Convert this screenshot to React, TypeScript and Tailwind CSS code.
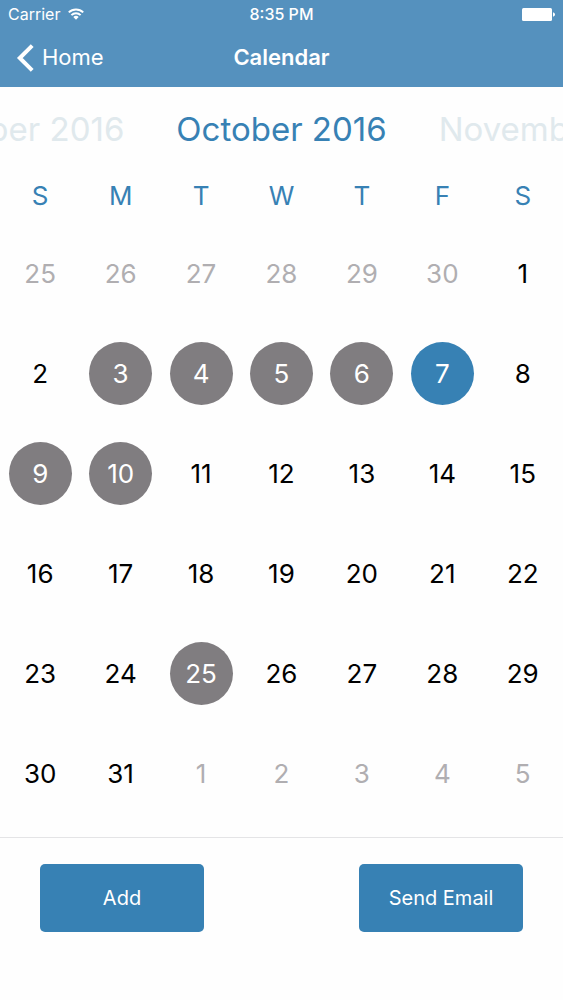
import clsx from "clsx";

type Day = { date: number; outside?: boolean; booked?: boolean; today?: boolean };

const weekdays = ["S", "M", "T", "W", "T", "F", "S"];
const booked = new Set([3, 4, 5, 6, 9, 10, 25]);
const today = 7;

const days: Day[] = [
  ...[25, 26, 27, 28, 29, 30].map((date) => ({ date, outside: true })),
  ...Array.from({ length: 31 }, (_, i) => ({
    date: i + 1,
    booked: booked.has(i + 1),
    today: i + 1 === today,
  })),
  ...[1, 2, 3, 4, 5].map((date) => ({ date, outside: true })),
];

const weeks = Array.from({ length: 6 }, (_, i) => days.slice(i * 7, i * 7 + 7));

function StatusBar() {
  return (
    <div className="grid h-7 grid-cols-3 items-center px-2 text-base">
      <div className="flex items-center gap-2">
        <span>Carrier</span>
        <svg className="h-3 w-4" viewBox="0 0 16 12" fill="none" stroke="currentColor" strokeWidth="2">
          <path d="M0.8 4.4a10.2 10.2 0 0 1 14.4 0" />
          <path d="M3.4 7.1a6.5 6.5 0 0 1 9.2 0" />
          <path d="M8 11.8 5.3 9.1a3.8 3.8 0 0 1 5.4 0z" fill="currentColor" stroke="none" />
        </svg>
      </div>
      <span className="text-center font-medium">8:35 PM</span>
      <svg className="h-[13px] w-[33px] justify-self-end" viewBox="0 0 33 13" fill="currentColor">
        <rect width="30" height="13" rx="1.5" />
        <path d="M31 4.2c1.4.5 2 1.3 2 2.3s-.6 1.8-2 2.3z" />
      </svg>
    </div>
  );
}

function NavBar() {
  return (
    <nav className="grid h-[59px] grid-cols-3 items-center px-4 text-[22px]">
      <a href="#home" className="flex items-center gap-2">
        <svg className="h-7 w-[18px]" viewBox="0 0 18 28" fill="none" stroke="currentColor" strokeWidth="4">
          <path d="M16.2 1.6 3.8 14l12.4 12.4" />
        </svg>
        Home
      </a>
      <h1 className="text-center font-semibold">Calendar</h1>
    </nav>
  );
}

function MonthPicker() {
  return (
    <div className="flex h-[86px] items-center justify-center gap-13 overflow-hidden text-[33px] whitespace-nowrap text-[#e0e9ed]">
      <div className="flex min-w-0 flex-1 justify-end">
        <button type="button">September 2016</button>
      </div>
      <h2 className="text-[#3781b4]">October 2016</h2>
      <div className="flex min-w-0 flex-1">
        <button type="button">November 2016</button>
      </div>
    </div>
  );
}

function DayCell({ day }: { day: Day }) {
  return (
    <td className="h-[100px] p-0">
      <button
        type="button"
        className={clsx(
          "mx-auto flex size-[63px] items-center justify-center rounded-full",
          day.outside && "text-[#b0aeb1]",
          day.booked && "bg-[#807d80] text-white",
          day.today && "bg-[#3781b4] text-white",
        )}
      >
        {day.date}
      </button>
    </td>
  );
}

export default function App() {
  return (
    <div className="flex min-h-screen flex-col bg-[#fefefe] font-['Inter',sans-serif] text-black">
      <header className="bg-[#5591be] text-white">
        <StatusBar />
        <NavBar />
      </header>

      <main>
        <MonthPicker />
        <table className="w-full table-fixed border-collapse text-center text-[26px]">
          <thead>
            <tr>
              {weekdays.map((name, i) => (
                <th key={i} scope="col" className="h-[50px] p-0 pb-1.5 font-normal text-[#3781b4]">
                  {name}
                </th>
              ))}
            </tr>
          </thead>
          <tbody>
            {weeks.map((week, i) => (
              <tr key={i}>
                {week.map((day, j) => (
                  <DayCell key={j} day={day} />
                ))}
              </tr>
            ))}
          </tbody>
        </table>
      </main>

      <footer className="mt-3.5 flex justify-between border-t border-[#e4e4e6] px-10 pt-[26px] text-xl text-white">
        <button type="button" className="h-[68px] w-[164px] rounded-[5px] bg-[#3781b4]">
          Add
        </button>
        <button type="button" className="h-[68px] w-[164px] rounded-[5px] bg-[#3781b4]">
          Send Email
        </button>
      </footer>
    </div>
  );
}
